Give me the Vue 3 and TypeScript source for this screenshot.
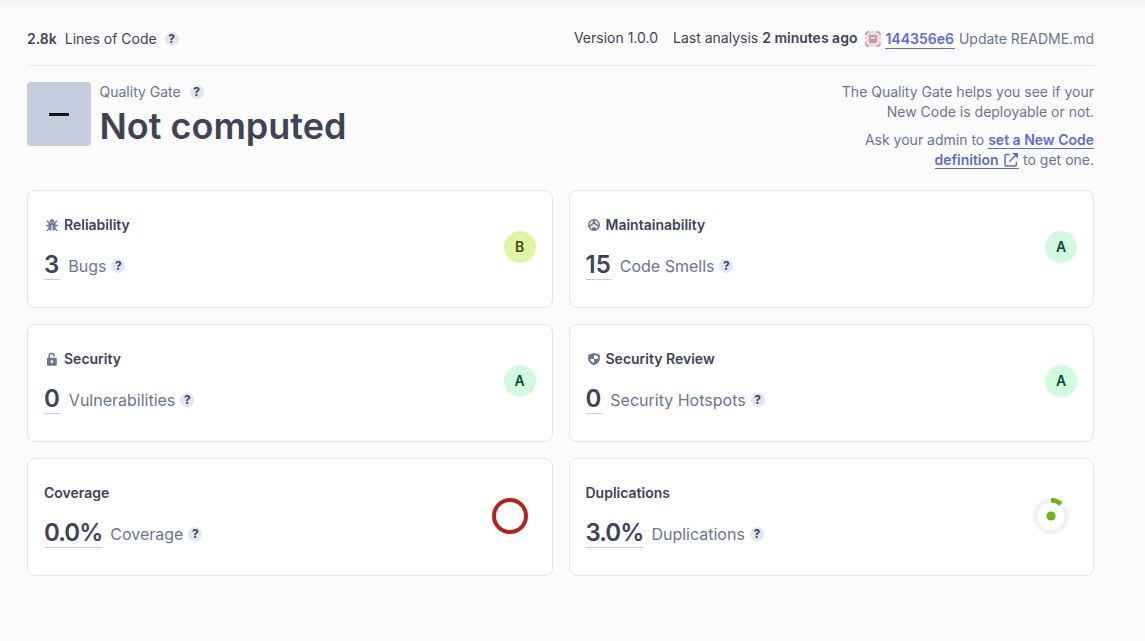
<script setup lang="ts">
interface Measure {
  title: string
  icon?: 'bug' | 'smell' | 'lock' | 'shield'
  value: string
  label: string
  rating?: 'A' | 'B'
  ring?: 'coverage' | 'duplications'
}

const measures: Measure[] = [
  { title: 'Reliability', icon: 'bug', value: '3', label: 'Bugs', rating: 'B' },
  { title: 'Maintainability', icon: 'smell', value: '15', label: 'Code Smells', rating: 'A' },
  { title: 'Security', icon: 'lock', value: '0', label: 'Vulnerabilities', rating: 'A' },
  { title: 'Security Review', icon: 'shield', value: '0', label: 'Security Hotspots', rating: 'A' },
  { title: 'Coverage', value: '0.0%', label: 'Coverage', ring: 'coverage' },
  { title: 'Duplications', value: '3.0%', label: 'Duplications', ring: 'duplications' },
]

const avatarRows = [
  '22010122',
  '20101002',
  '01222210',
  '10211201',
  '01222210',
  '10222201',
  '20101002',
  '22010122',
]
const avatarFill: Record<string, string> = { '0': '#f3e9ed', '1': '#e5d2d9', '2': '#c79cab' }
</script>

<template>
  <main class="page">
    <header class="topbar">
      <div class="lines">
        <strong>2.8k</strong>
        <span class="lines-label">Lines of Code</span>
        <span class="help">?</span>
      </div>
      <div class="analysis">
        <span class="version">Version 1.0.0</span>
        <span class="last">Last analysis <strong>2 minutes ago</strong></span>
        <svg class="avatar" viewBox="0 0 16 16" shape-rendering="crispEdges">
          <template v-for="(row, y) in avatarRows" :key="y">
            <rect v-for="(c, x) in row.split('')" :key="x" :x="x * 2" :y="y * 2" width="2" height="2" :fill="avatarFill[c]" />
          </template>
        </svg>
        <a class="link hash">144356e6</a>
        <span class="commit">Update README.md</span>
      </div>
    </header>

    <section class="gate">
      <div class="gate-status">
        <div class="gate-icon"><i class="dash"></i></div>
        <div class="gate-text">
          <div class="gate-label">Quality Gate <span class="help">?</span></div>
          <h1>Not computed</h1>
        </div>
      </div>
      <div class="gate-info">
        <p>The Quality Gate helps you see if your<br />New Code is deployable or not.</p>
        <p>
          Ask your admin to <a class="link">set a New Code</a><br /><a class="link">definition
            <svg class="external" viewBox="0 0 14 14" fill="none" stroke="currentColor" stroke-width="1.5">
              <path d="M5.6 1.6H2.2Q1 1.6 1 2.8V11.8Q1 13 2.2 13H11.2Q12.4 13 12.4 11.8V8.4" />
              <path d="M5.3 8.7L12.3 1.7" />
              <path d="M8.2 0H14V5.8Z" fill="currentColor" stroke="none" />
            </svg></a> to get one.
        </p>
      </div>
    </section>

    <section class="cards">
      <article v-for="m in measures" :key="m.title" class="card">
        <div>
          <h2>
            <svg v-if="m.icon" class="icon" :class="m.icon" viewBox="0 0 12 12" fill="currentColor">
              <template v-if="m.icon === 'bug'">
                <path d="M3.6 3Q3.8 .2 6 .2Q8.2 .2 8.4 3Z" />
                <path d="M2.6 3.6H9.4V8.2Q9.4 11.2 6.6 11.7V6H5.4V11.7Q2.6 11.2 2.6 8.2Z" />
                <path d="M1 1.8L3.2 4M11 1.8L8.8 4M0 6.5H3M12 6.5H9M1 11.7L3.4 9.3M11 11.7L8.6 9.3" fill="none" stroke="currentColor" stroke-width="1.3" />
              </template>
              <template v-else-if="m.icon === 'smell'">
                <circle cx="6" cy="6" r="5.3" fill="none" stroke="currentColor" stroke-width="1.4" />
                <path d="M6 6L4.2 1H7.8ZM6 6L1 5V8L2.4 9.8ZM6 6L11 5V8L9.6 9.8Z" opacity=".35" />
                <path d="M4.9 1V3.2L2.6 5.8L.8 6.2V7.5L3.5 6.8L5 5.2H7L8.5 6.8L11.2 7.5V6.2L9.4 5.8L7.1 3.2V1Z" />
                <path d="M3.7 11L4.2 8.8Q6 7.4 7.8 8.8L8.3 11Z" />
              </template>
              <template v-else-if="m.icon === 'lock'">
                <path d="M3.2 5.2V3.2A2.4 2.4 0 0 1 8 2.8V3.8" fill="none" stroke="currentColor" stroke-width="1.5" />
                <path fill-rule="evenodd" d="M2 4.8H9.8Q10.8 4.8 10.8 5.8V11.8Q10.8 12.8 9.8 12.8H2Q1 12.8 1 11.8V5.8Q1 4.8 2 4.8ZM5.9 7.3A1.4 1.4 0 1 0 5.9 10.1A1.4 1.4 0 1 0 5.9 7.3Z" />
              </template>
              <template v-else>
                <path fill-rule="evenodd" d="M6 0L11.8 1.7V6Q11.4 10.2 6 12.2Q.6 10.2 .2 6V1.7ZM6 2V6H9.8V3.1ZM6 6H2.1Q2.7 8.8 6 10.2Z" />
              </template>
            </svg>
            {{ m.title }}
          </h2>
          <div class="reading">
            <a class="value" :class="{ percent: m.ring }">{{ m.value }}</a>
            <span class="label">{{ m.label }}</span>
            <span class="help">?</span>
          </div>
        </div>
        <span v-if="m.rating" class="rating" :class="'rating-' + m.rating">{{ m.rating }}</span>
        <svg v-else-if="m.ring === 'coverage'" class="ring" viewBox="0 0 36 36" fill="none">
          <circle cx="18" cy="18" r="16" stroke="#b42318" stroke-width="4" />
        </svg>
        <svg v-else class="ring" viewBox="0 0 36 36" fill="none">
          <circle cx="18" cy="18" r="15.7" stroke="#eff2f9" stroke-width="4.6" />
          <path d="M18 2.3A15.7 15.7 0 0 1 28 5.9" stroke="#6cb512" stroke-width="4.6" />
          <circle cx="18" cy="18" r="4.6" fill="#6cb512" />
        </svg>
      </article>
    </section>
  </main>
</template>

<style>
body {
  background: #fcfcfd;
}
</style>

<style scoped>
.page {
  box-sizing: border-box;
  height: 641px;
  padding: 0 51px 0 27px;
  background: linear-gradient(#f5f5f5, #fcfcfd 14px);
  color: #3e4357;
  font: 400 14px/20px Inter, sans-serif;
}
strong {
  font-weight: 600;
}
.topbar {
  display: flex;
  justify-content: space-between;
  box-sizing: border-box;
  height: 66px;
  padding-top: 29px;
  border-bottom: 1px solid #ebebeb;
  white-space: nowrap;
}
.lines,
.analysis {
  display: flex;
  height: 20px;
  align-items: center;
}
.lines-label {
  margin-left: 8px;
}
.help {
  display: inline-flex;
  width: 14px;
  height: 14px;
  margin-left: 9px;
  align-items: center;
  justify-content: center;
  border-radius: 50%;
  background: #e1e6f3;
  color: #3e4357;
  font-size: 12px;
  font-weight: 700;
  line-height: 14px;
}
.lines .help {
  margin-left: 8px;
}
.last {
  margin-left: 15px;
}
.version,
.last {
  position: relative;
  top: -1px;
}
.avatar {
  width: 16px;
  height: 16px;
  margin-left: 8px;
  border-radius: 4px;
}
.link {
  border-bottom: 1px solid #5d6cd0;
  color: #5d6cd0;
  font-weight: 600;
}
.hash {
  height: 18px;
  margin: 0 4px;
  padding-right: 1px;
  line-height: 17px;
}
.commit,
.gate-label,
.gate-info,
.label {
  color: #6a7590;
}
.gate {
  display: flex;
  justify-content: space-between;
  height: 108px;
  padding-top: 16px;
}
.gate-status {
  display: flex;
  gap: 8.5px;
}
.gate-icon {
  display: flex;
  width: 64px;
  height: 64px;
  align-items: center;
  justify-content: center;
  border-radius: 4px;
  background: #c5cddf;
}
.dash {
  width: 20px;
  height: 3px;
  background: #11131c;
}
.gate-label {
  display: flex;
  align-items: center;
}
h1 {
  margin: 0;
  font-size: 36px;
  font-weight: 600;
  line-height: 48px;
}
.gate-info {
  text-align: right;
}
.gate-info p {
  margin: 0 0 8px;
}
.external {
  width: 14px;
  height: 14px;
  margin: 0 1px 0 2px;
  vertical-align: -2px;
}
.cards {
  display: grid;
  grid-template-columns: 1fr 1fr;
  grid-auto-rows: 118px;
  gap: 16px;
}
.card {
  display: flex;
  justify-content: space-between;
  box-sizing: border-box;
  padding: 24px 16px;
  border: 1px solid #e1e6f3;
  border-radius: 8px;
  background: #fff;
}
h2 {
  display: flex;
  height: 20px;
  margin: 0;
  align-items: center;
  font-size: 14px;
  font-weight: 600;
}
.icon {
  width: 12px;
  height: 12px;
  margin: 0 6px 0 2px;
  overflow: visible;
  color: #6a7590;
}
.reading {
  display: flex;
  height: 32px;
  margin-top: 13px;
  align-items: center;
}
.value {
  height: 31px;
  padding-right: 1px;
  border-bottom: 1px solid #c5cddf;
  font-size: 24px;
  font-weight: 600;
  line-height: 34px;
}
.percent {
  padding-right: 0;
  letter-spacing: -0.95px;
}
.label {
  margin-left: 8px;
  padding-top: 4px;
  font-size: 16px;
}
.reading .help {
  margin: 4px 0 0 5px;
}
.rating {
  display: flex;
  width: 32px;
  height: 32px;
  margin-top: 16px;
  align-items: center;
  justify-content: center;
  border-radius: 50%;
  font-weight: 600;
}
.rating-A {
  background: #d1fadf;
  color: #054f31;
}
.rating-B {
  background: #dff5a4;
  color: #364b14;
}
.ring {
  width: 36px;
  height: 36px;
  margin: 15px 8px 0 0;
}
</style>
